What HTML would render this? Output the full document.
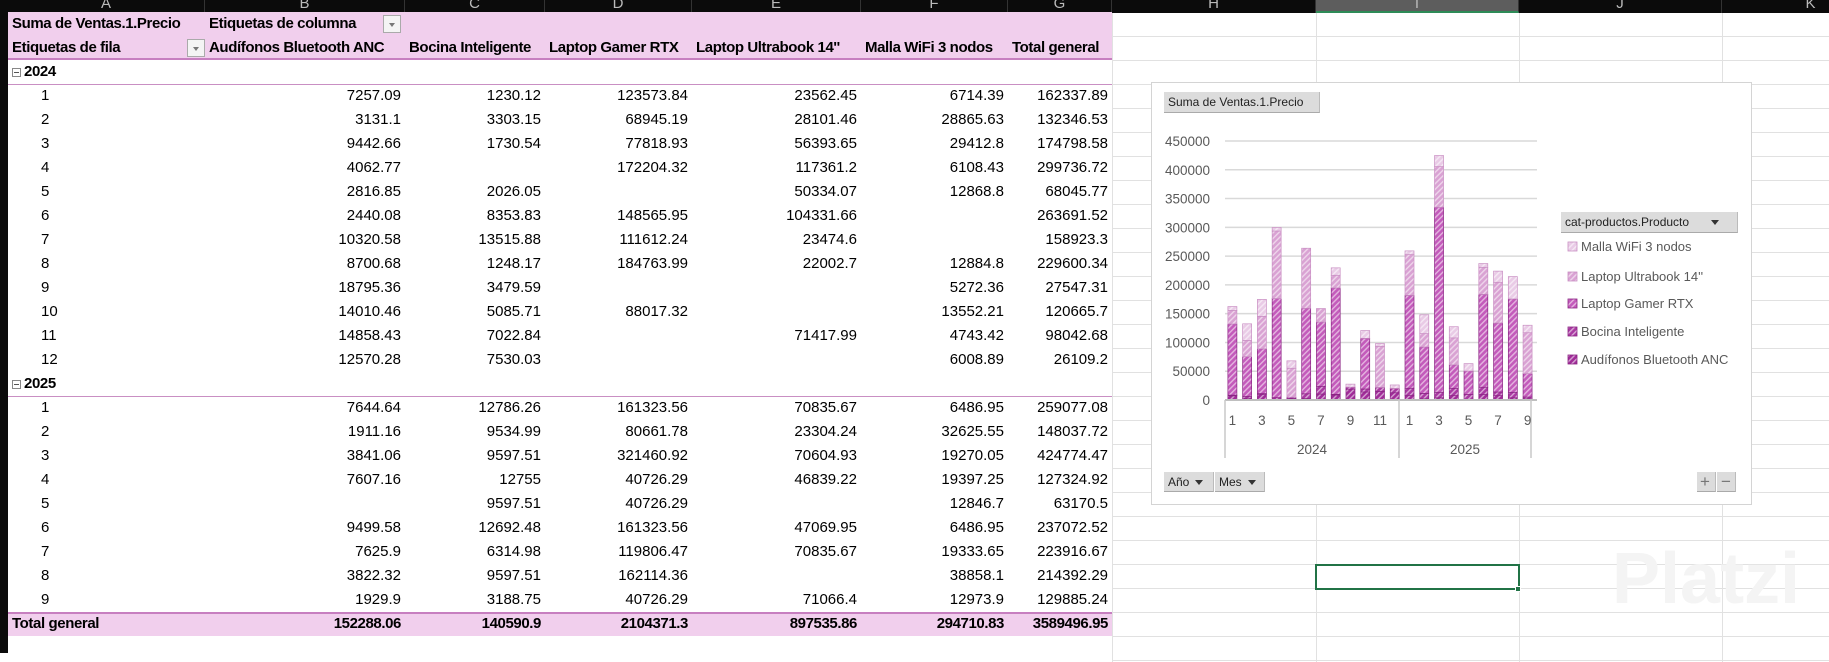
<!DOCTYPE html>
<html><head><meta charset="utf-8">
<style>
*{margin:0;padding:0;box-sizing:border-box}
body{width:1829px;height:653px;overflow:hidden;background:#fff;font-family:"Liberation Sans",sans-serif;position:relative}
.a{position:absolute;white-space:nowrap}
.ch{position:absolute;top:0;height:13px;overflow:hidden;color:#bbb;font-size:15px;text-align:center;line-height:8px;border-right:1px solid #333}
.c{position:absolute;height:24px;line-height:24px;font-size:15px;color:#000;white-space:nowrap;overflow:visible}
.r{text-align:right}
.b{font-weight:bold;letter-spacing:-0.4px}
.dd{position:absolute;width:18px;height:18px;border:1px solid #aaa;background:#f4f4f4}
.dd:after{content:"";position:absolute;left:5px;top:7px;border-left:3px solid transparent;border-right:3px solid transparent;border-top:4px solid #777}
.btn{position:absolute;background:#dcdcdc;border-right:1px solid #bbb;border-bottom:1px solid #aaa;font-size:12px;color:#222;line-height:20px;padding-left:4px}
.tri{display:inline-block;margin-left:6px;border-left:4px solid transparent;border-right:4px solid transparent;border-top:5px solid #333;vertical-align:middle}
</style></head><body>
<div id="root"></div>
<script>
var RH=24;
var R=document.getElementById('root');var h='';
var cols=[[8,205,'A'],[205,405,'B'],[405,545,'C'],[545,692,'D'],[692,861,'E'],[861,1008,'F'],[1008,1112,'G'],[1112,1316,'H'],[1316,1519,'I'],[1519,1722,'J'],[1722,1900,'K']];
for(var i=0;i<28;i++){var y=12+i*RH;h+='<div class="a" style="left:1112px;top:'+y+'px;width:720px;height:1px;background:#e1e1e1"></div>';}
[1112,1316,1519,1722].forEach(function(x){h+='<div class="a" style="left:'+x+'px;top:12px;width:1px;height:650px;background:#e1e1e1"></div>';});
h+='<div class="a" style="left:0;top:0;width:1829px;height:13px;background:#0b0b0b"></div>';
cols.forEach(function(c){var bg=c[2]=='I'?'background:#5d5d5d;border-bottom:2px solid #2e8b57;':'';h+='<div class="ch" style="left:'+c[0]+'px;width:'+(c[1]-c[0])+'px;'+bg+'">'+c[2]+'</div>';});
h+='<div class="a" style="left:0;top:13px;width:8px;height:640px;background:#0b0b0b"></div>';
h+='<div class="a" style="left:8px;top:12px;width:1104px;height:'+(2*RH)+'px;background:#f1cfed;border-bottom:2px solid #c77fc0"></div>';
h+='<div class="a" style="left:8px;top:'+(12+25*RH)+'px;width:1104px;height:'+RH+'px;background:#f1cfed;border-top:2px solid #c77fc0"></div>';
h+='<div class="a" style="left:8px;top:'+(12+3*RH)+'px;width:1104px;height:1px;background:#c98fc3"></div>';
h+='<div class="a" style="left:8px;top:'+(12+16*RH)+'px;width:1104px;height:1px;background:#c98fc3"></div>';
function cell(ci,row,txt,cls){var c=cols[ci];var y=12+row*RH;
 if(cls.indexOf('r')>=0)h+='<div class="c '+cls+'" style="left:'+c[0]+'px;width:'+(c[1]-c[0]-4)+'px;top:'+y+'px">'+txt+'</div>';
 else h+='<div class="c '+cls+'" style="left:'+(c[0]+4)+'px;top:'+y+'px">'+txt+'</div>';}
cell(0,0,'Suma de Ventas.1.Precio','b');cell(1,0,'Etiquetas de columna','b');
h+='<div class="dd" style="left:383px;top:15px"></div><div class="dd" style="left:187px;top:39px"></div>';
cell(0,1,'Etiquetas de fila','b');
var hd=['Audífonos Bluetooth ANC','Bocina Inteligente','Laptop Gamer RTX','Laptop Ultrabook 14\'\'','Malla WiFi 3 nodos','Total general'];
hd.forEach(function(t,i){cell(i+1,1,t,'b');});
var d24=[[7257.09,1230.12,123573.84,23562.45,6714.39,162337.89],[3131.1,3303.15,68945.19,28101.46,28865.63,132346.53],[9442.66,1730.54,77818.93,56393.65,29412.8,174798.58],[4062.77,0,172204.32,117361.2,6108.43,299736.72],[2816.85,2026.05,0,50334.07,12868.8,68045.77],[2440.08,8353.83,148565.95,104331.66,0,263691.52],[10320.58,13515.88,111612.24,23474.6,0,158923.3],[8700.68,1248.17,184763.99,22002.7,12884.8,229600.34],[18795.36,3479.59,0,0,5272.36,27547.31],[14010.46,5085.71,88017.32,0,13552.21,120665.7],[14858.43,7022.84,0,71417.99,4743.42,98042.68],[12570.28,7530.03,0,0,6008.89,26109.2]];
var d25=[[7644.64,12786.26,161323.56,70835.67,6486.95,259077.08],[1911.16,9534.99,80661.78,23304.24,32625.55,148037.72],[3841.06,9597.51,321460.92,70604.93,19270.05,424774.47],[7607.16,12755,40726.29,46839.22,19397.25,127324.92],[0,9597.51,40726.29,0,12846.7,63170.5],[9499.58,12692.48,161323.56,47069.95,6486.95,237072.52],[7625.9,6314.98,119806.47,70835.67,19333.65,223916.67],[3822.32,9597.51,162114.36,0,38858.1,214392.29],[1929.9,3188.75,40726.29,71066.4,12973.9,129885.24]];
function yr(row,t){var y=12+row*RH;h+='<div class="a" style="left:12px;top:'+(y+8)+'px;width:9px;height:9px;border:1px solid #888;background:#fff"><div style="position:absolute;left:1px;top:3px;width:5px;height:1px;background:#555"></div></div>';h+='<div class="c b" style="left:24px;top:'+y+'px">'+t+'</div>';}
function rows(start,data){data.forEach(function(r,i){var row=start+i;h+='<div class="c" style="left:41px;top:'+(12+row*RH)+'px">'+(i+1)+'</div>';r.forEach(function(v,j){if(v)cell(j+1,row,String(v),'r');});});}
yr(2,'2024');rows(3,d24);yr(15,'2025');rows(16,d25);
cell(0,25,'Total general','b');
['152288.06','140590.9','2104371.3','897535.86','294710.83','3589496.95'].forEach(function(t,i){cell(i+1,25,t,'r b');});
h+='<div class="a" style="left:1315px;top:564px;width:205px;height:26px;border:2px solid #217346"></div>';
h+='<div class="a" style="left:1515px;top:586px;width:6px;height:6px;background:#217346;border:1px solid #fff"></div>';
h+='<div class="a" style="left:1612px;top:538px;font-size:72px;color:#f4f4f4;font-weight:bold">Platzi</div>';
h+='<div class="a" style="left:1151px;top:82px;width:601px;height:423px;background:#fff;border:1px solid #d4d4d4"></div>';
var s='<svg class="a" style="left:0;top:0" width="1829" height="653"><defs>';
var cl=['#a02c98','#a93aa2','#c35bbb','#d9a2d3','#e9cbe6'];
cl.forEach(function(c,i){s+='<pattern id="p'+i+'" width="4" height="4" patternUnits="userSpaceOnUse" patternTransform="rotate(45)"><rect width="4" height="4" fill="'+c+'"/><rect width="1.4" height="4" fill="#fff" opacity="0.55"/></pattern>';});
s+='</defs>';
var Y0=400,Y9=141;
for(var k=0;k<=9;k++){var y=Y0-k*(Y0-Y9)/9;s+='<line x1="1225" x2="1537" y1="'+y+'" y2="'+y+'" stroke="#d9d9d9" stroke-width="1.5"/>';s+='<text x="1210" y="'+(y+5)+'" text-anchor="end" font-size="13.5" fill="#595959" font-family="Liberation Sans">'+(k*50000)+'</text>';}
var all=d24.concat(d25);var sc=(Y0-Y9)/450000;
all.forEach(function(r,i){var cx=1225+(i+0.5)*14.76;var y=Y0;for(var j=0;j<5;j++){if(!r[j])continue;var hh=r[j]*sc;y-=hh;s+='<rect x="'+(cx-4.5)+'" y="'+y+'" width="9" height="'+hh+'" fill="url(#p'+j+')" stroke="'+(j<3?'#8a2483':'#c98fc3')+'" stroke-width="0.7"/>';}});
s+='<line x1="1225" x2="1537" y1="'+Y0+'" y2="'+Y0+'" stroke="#bfbfbf" stroke-width="2"/>';
[1225,1399,1531].forEach(function(x){s+='<line x1="'+x+'" x2="'+x+'" y1="'+Y0+'" y2="458" stroke="#c8c8c8" stroke-width="1.5"/>';});
var lb=['1','3','5','7','9','11','1','3','5','7','9'];var idx=[0,2,4,6,8,10,12,14,16,18,20];
idx.forEach(function(ii,n){var cx=1225+(ii+0.5)*14.76;s+='<text x="'+cx+'" y="425" text-anchor="middle" font-size="13.5" fill="#595959" font-family="Liberation Sans">'+lb[n]+'</text>';});
s+='<text x="1312" y="454" text-anchor="middle" font-size="13.5" fill="#595959" font-family="Liberation Sans">2024</text><text x="1465" y="454" text-anchor="middle" font-size="13.5" fill="#595959" font-family="Liberation Sans">2025</text>';
var lg=['Malla WiFi 3 nodos','Laptop Ultrabook 14\'\'','Laptop Gamer RTX','Bocina Inteligente','Audífonos Bluetooth ANC'];
var ly=[247,277,304,332,360];
lg.forEach(function(t,i){var p=4-i;s+='<rect x="1568" y="'+(ly[i]-5)+'" width="9" height="9" fill="url(#p'+p+')" stroke="'+(p<3?'#8a2483':'#c98fc3')+'" stroke-width="0.8"/><text x="1581" y="'+(ly[i]+4)+'" font-size="13" fill="#595959" font-family="Liberation Sans">'+t+'</text>';});
s+='</svg>';h+=s;
h+='<div class="btn" style="left:1164px;top:92px;width:156px;height:21px">Suma de Ventas.1.Precio</div>';
h+='<div class="btn" style="left:1561px;top:212px;width:177px;height:21px">cat-productos.Producto<span class="tri" style="margin-left:22px"></span></div>';
h+='<div class="btn" style="left:1164px;top:472px;width:50px;height:20px">Año<span class="tri"></span></div>';
h+='<div class="btn" style="left:1215px;top:472px;width:50px;height:20px">Mes<span class="tri"></span></div>';
h+='<div class="btn" style="left:1697px;top:472px;width:19px;height:20px;font-size:17px;color:#777;padding-left:3px">+</div>';
h+='<div class="btn" style="left:1717px;top:472px;width:19px;height:20px;font-size:17px;color:#777;padding-left:4px">−</div>';
R.innerHTML=h;
</script>
</body></html>
